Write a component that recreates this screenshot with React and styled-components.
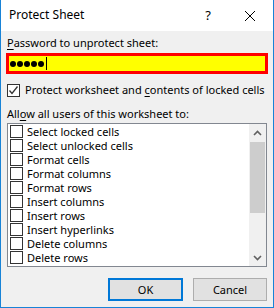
import React from "react";
import styled, { createGlobalStyle } from "styled-components";

const GlobalStyle = createGlobalStyle`
  html, body {
    margin: 0;
    padding: 0;
    background: #ffffff;
  }
  * {
    box-sizing: border-box;
  }
`;

const items = [
  "Select locked cells",
  "Select unlocked cells",
  "Format cells",
  "Format columns",
  "Format rows",
  "Insert columns",
  "Insert rows",
  "Insert hyperlinks",
  "Delete columns",
  "Delete rows",
];

function Check({ checked }) {
  return (
    <Box>
      {checked && (
        <svg width="11" height="11" viewBox="0 0 11 11">
          <path d="M1.5 5.5 L4 8.5 L9.5 1.5" fill="none" stroke="#333" strokeWidth="1.3" />
        </svg>
      )}
    </Box>
  );
}

function App() {
  return (
    <>
      <GlobalStyle />
      <Window>
        <TitleBar>
          <Title>Protect Sheet</Title>
          <Help>?</Help>
          <Close>
            <svg width="12" height="12" viewBox="0 0 12 12">
              <path d="M1 1 L11 11 M11 1 L1 11" stroke="#000" strokeWidth="1" />
            </svg>
          </Close>
        </TitleBar>
        <Body>
          <Label>
            <u>P</u>assword to unprotect sheet:
          </Label>
          <PasswordBox>
            {[0, 1, 2, 3, 4].map((i) => (
              <Dot key={i} />
            ))}
            <Caret />
          </PasswordBox>
          <CheckRow>
            <Check checked />
            <span>
              Protect worksheet and <u>c</u>ontents of locked cells
            </span>
          </CheckRow>
          <Label $top={9}>
            All<u>o</u>w all users of this worksheet to:
          </Label>
          <ListBox>
            <Items>
              {items.map((t) => (
                <Item key={t}>
                  <Check />
                  <span>{t}</span>
                </Item>
              ))}
            </Items>
            <ScrollBar>
              <Arrow>
                <svg width="9" height="6" viewBox="0 0 9 6">
                  <path d="M1 5 L4.5 1.5 L8 5" fill="none" stroke="#606060" strokeWidth="1.6" />
                </svg>
              </Arrow>
              <Thumb />
              <Track />
              <Arrow>
                <svg width="9" height="6" viewBox="0 0 9 6">
                  <path d="M1 1 L4.5 4.5 L8 1" fill="none" stroke="#606060" strokeWidth="1.6" />
                </svg>
              </Arrow>
            </ScrollBar>
          </ListBox>
          <Buttons>
            <Button $primary>OK</Button>
            <Button>Cancel</Button>
          </Buttons>
        </Body>
      </Window>
    </>
  );
}

const Window = styled.div`
  width: 274px;
  height: 308px;
  display: flex;
  flex-direction: column;
  border: 1px solid #1883d7;
  border-top: none;
  font-family: "Noto Sans", "Open Sans", sans-serif;
  font-size: 11px;
  color: #000;
  overflow: hidden;
`;

const TitleBar = styled.div`
  height: 31px;
  flex: 0 0 31px;
  background: #fff;
  display: flex;
  align-items: center;
  padding-left: 8px;
`;

const Title = styled.div`
  flex: 1;
  font-size: 12px;
  padding-bottom: 2px;
`;

const Help = styled.div`
  width: 46px;
  text-align: center;
  font-size: 13px;
  padding-bottom: 2px;
`;

const Close = styled.div`
  width: 46px;
  display: flex;
  justify-content: center;
  margin-left: -4px;
`;

const Label = styled.div`
  margin-top: ${(p) => p.$top || 0}px;
  padding-left: 1px;
  line-height: 16px;
  height: 17px;
  white-space: nowrap;
  u {
    text-decoration-thickness: 1px;
    text-underline-offset: 2px;
  }
`;

const Body = styled.div`
  flex: 1;
  background: #f0f0f0;
  padding: 4px 5px 0 5px;
  display: flex;
  flex-direction: column;
`;

const PasswordBox = styled.div`
  height: 21px;
  margin-top: 1px;
  flex: 0 0 21px;
  background: #ffff00;
  border: 3px solid #ff0000;
  display: flex;
  align-items: center;
  padding-left: 1px;
  gap: 1px;
`;

const Dot = styled.div`
  width: 6px;
  height: 6px;
  border-radius: 50%;
  background: #000;
`;

const Caret = styled.div`
  width: 1px;
  height: 13px;
  background: #000;
  margin-left: 1px;
`;

const CheckRow = styled.div`
  display: flex;
  align-items: center;
  gap: 5px;
  margin-top: 9px;
  padding-left: 1px;
  height: 14px;
  line-height: 14px;
  white-space: nowrap;
  u {
    text-underline-offset: 2px;
  }
`;

const Box = styled.div`
  width: 13px;
  height: 13px;
  flex: 0 0 13px;
  border: 1px solid #333;
  background: #fff;
  display: flex;
  align-items: center;
  justify-content: center;
`;

const ListBox = styled.div`
  margin: 0 1px;
  height: 144px;
  flex: 0 0 144px;
  border: 1px solid #828790;
  background: #fff;
  display: flex;
  overflow: hidden;
`;

const Items = styled.div`
  flex: 1;
  padding-left: 2px;
`;

const Item = styled.div`
  height: 14px;
  display: flex;
  align-items: center;
  gap: 4px;
  white-space: nowrap;
`;

const ScrollBar = styled.div`
  width: 17px;
  background: #f0f0f0;
  display: flex;
  flex-direction: column;
`;

const Arrow = styled.div`
  height: 17px;
  flex: 0 0 17px;
  display: flex;
  align-items: center;
  justify-content: center;
`;

const Thumb = styled.div`
  height: 71px;
  margin: 1px 1px 0 1px;
  background: #cdcdcd;
`;

const Track = styled.div`
  flex: 1;
`;

const Buttons = styled.div`
  display: flex;
  justify-content: flex-end;
  gap: 10px;
  margin-top: 11px;
  padding-right: 1px;
`;

const Button = styled.button`
  width: ${(p) => (p.$primary ? 75 : 74)}px;
  height: 23px;
  background: #e1e1e1;
  border: ${(p) => (p.$primary ? "2px solid #0078d7" : "1px solid #adadad")};
  font-family: "Noto Sans", "Open Sans", sans-serif;
  font-size: 11px;
  color: #000;
  padding: 0;
`;

export default App;
